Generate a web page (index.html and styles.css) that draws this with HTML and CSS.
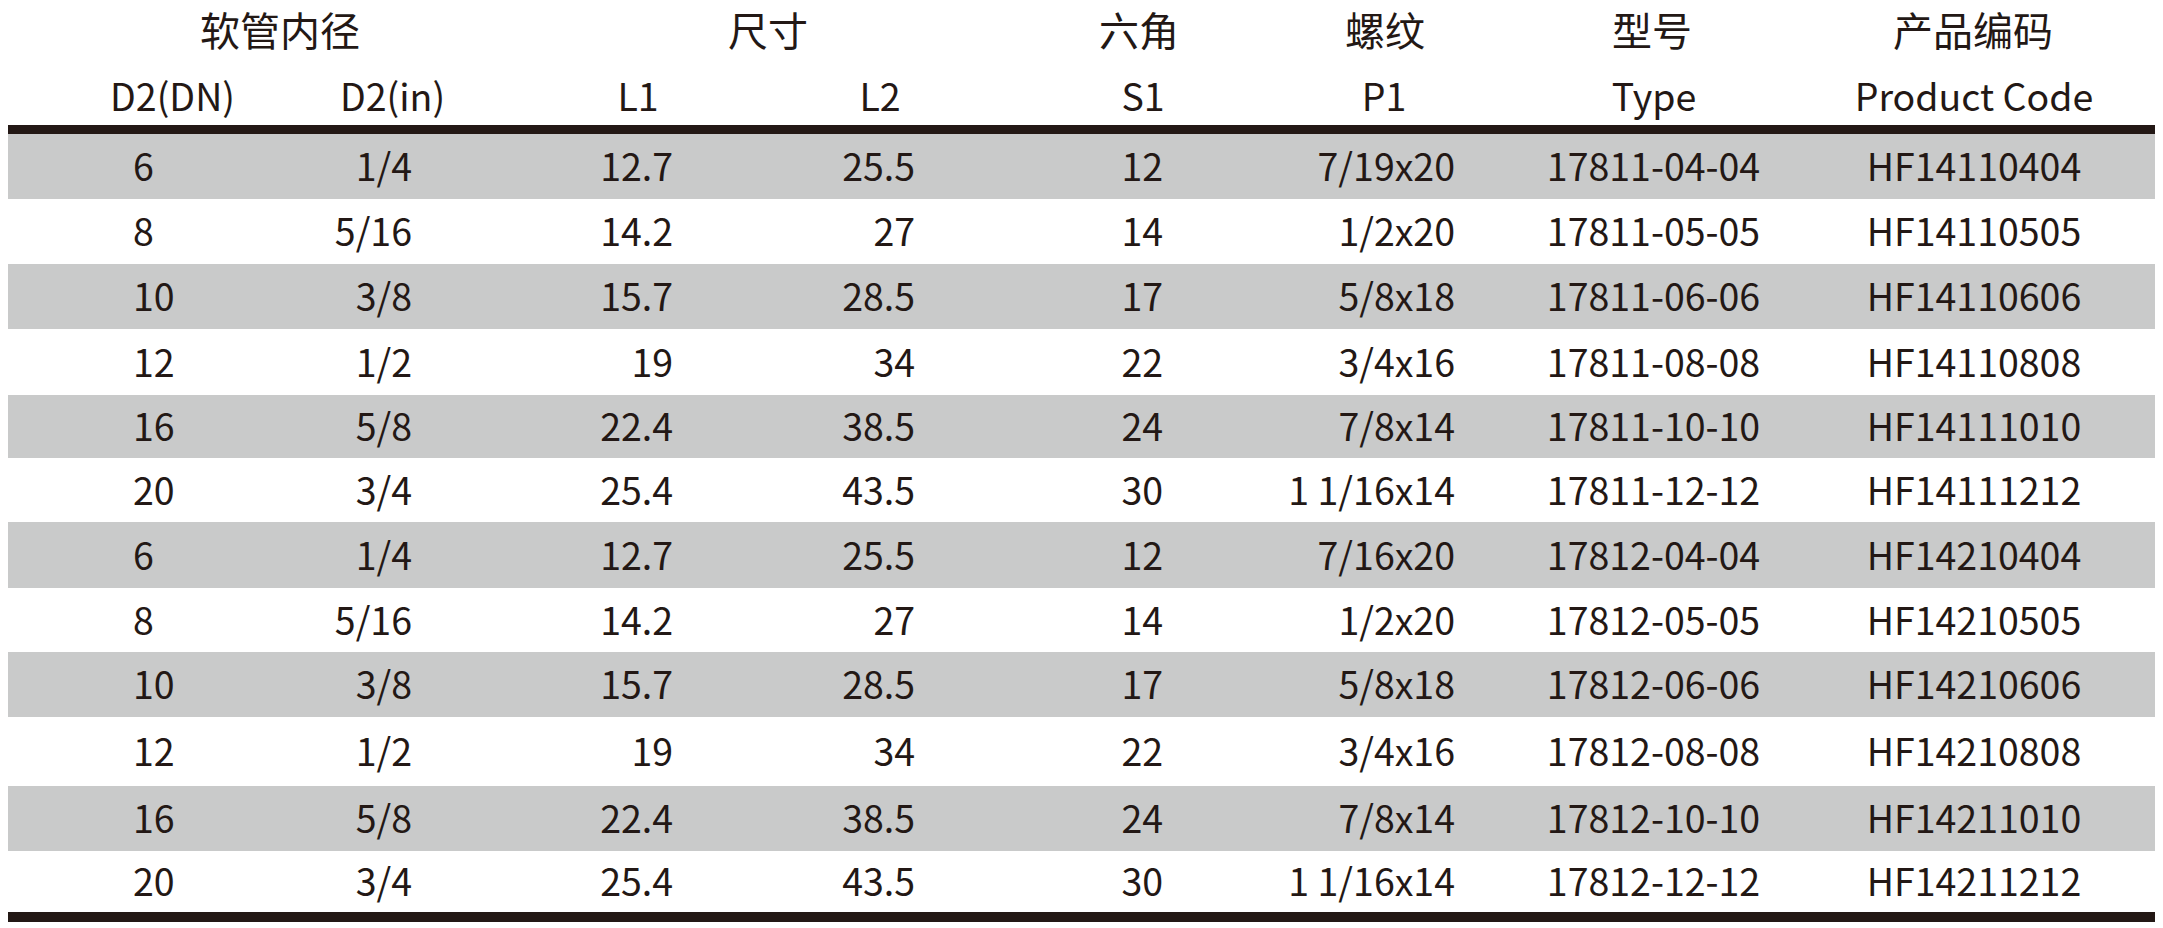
FILE: index.html
```html
<!DOCTYPE html>
<html lang="zh-CN">
<head>
<meta charset="utf-8">
<title>规格表</title>
<link rel="stylesheet" href="styles.css">
</head>
<body>
<div class="spec">
  <div class="head cn">
    <div class="h-hose">软管内径</div>
    <div class="h-size">尺寸</div>
    <div class="h-hex">六角</div>
    <div class="h-thread">螺纹</div>
    <div class="h-type">型号</div>
    <div class="h-code">产品编码</div>
  </div>
  <div class="head en">
    <div class="e1">D2(DN)</div>
    <div class="e2">D2(in)</div>
    <div class="e3">L1</div>
    <div class="e4">L2</div>
    <div class="e5">S1</div>
    <div class="e6">P1</div>
    <div class="e7">Type</div>
    <div class="e8">Product Code</div>
  </div>
  <div class="body">
    <div class="row"><div class="d1">6</div><div class="d2">1/4</div><div class="d3">12.7</div><div class="d4">25.5</div><div class="d5">12</div><div class="d6">7/19x20</div><div class="d7">17811-04-04</div><div class="d8">HF14110404</div></div>
    <div class="row"><div class="d1">8</div><div class="d2">5/16</div><div class="d3">14.2</div><div class="d4">27</div><div class="d5">14</div><div class="d6">1/2x20</div><div class="d7">17811-05-05</div><div class="d8">HF14110505</div></div>
    <div class="row"><div class="d1">10</div><div class="d2">3/8</div><div class="d3">15.7</div><div class="d4">28.5</div><div class="d5">17</div><div class="d6">5/8x18</div><div class="d7">17811-06-06</div><div class="d8">HF14110606</div></div>
    <div class="row"><div class="d1">12</div><div class="d2">1/2</div><div class="d3">19</div><div class="d4">34</div><div class="d5">22</div><div class="d6">3/4x16</div><div class="d7">17811-08-08</div><div class="d8">HF14110808</div></div>
    <div class="row"><div class="d1">16</div><div class="d2">5/8</div><div class="d3">22.4</div><div class="d4">38.5</div><div class="d5">24</div><div class="d6">7/8x14</div><div class="d7">17811-10-10</div><div class="d8">HF14111010</div></div>
    <div class="row"><div class="d1">20</div><div class="d2">3/4</div><div class="d3">25.4</div><div class="d4">43.5</div><div class="d5">30</div><div class="d6">1 1/16x14</div><div class="d7">17811-12-12</div><div class="d8">HF14111212</div></div>
    <div class="row"><div class="d1">6</div><div class="d2">1/4</div><div class="d3">12.7</div><div class="d4">25.5</div><div class="d5">12</div><div class="d6">7/16x20</div><div class="d7">17812-04-04</div><div class="d8">HF14210404</div></div>
    <div class="row"><div class="d1">8</div><div class="d2">5/16</div><div class="d3">14.2</div><div class="d4">27</div><div class="d5">14</div><div class="d6">1/2x20</div><div class="d7">17812-05-05</div><div class="d8">HF14210505</div></div>
    <div class="row"><div class="d1">10</div><div class="d2">3/8</div><div class="d3">15.7</div><div class="d4">28.5</div><div class="d5">17</div><div class="d6">5/8x18</div><div class="d7">17812-06-06</div><div class="d8">HF14210606</div></div>
    <div class="row"><div class="d1">12</div><div class="d2">1/2</div><div class="d3">19</div><div class="d4">34</div><div class="d5">22</div><div class="d6">3/4x16</div><div class="d7">17812-08-08</div><div class="d8">HF14210808</div></div>
    <div class="row"><div class="d1">16</div><div class="d2">5/8</div><div class="d3">22.4</div><div class="d4">38.5</div><div class="d5">24</div><div class="d6">7/8x14</div><div class="d7">17812-10-10</div><div class="d8">HF14211010</div></div>
    <div class="row"><div class="d1">20</div><div class="d2">3/4</div><div class="d3">25.4</div><div class="d4">43.5</div><div class="d5">30</div><div class="d6">1 1/16x14</div><div class="d7">17812-12-12</div><div class="d8">HF14211212</div></div>
  </div>
</div>
</body>
</html>
```

FILE: styles.css
```css
html, body {
  background: #ffffff;
}

body {
  margin: 8px;
  font-family: "Noto Sans CJK SC", "Noto Sans", sans-serif;
  color: #231815;
}

.spec {
  width: 2147px;
  --cols: 252px 210px 230px 260px 280px 260px 300px 355px;
}

.head {
  display: grid;
  grid-template-columns: var(--cols);
  white-space: nowrap;
}

.head > div,
.row > div {
  white-space: nowrap;
}

/* Chinese header row */
.cn {
  font-size: 40px;
  line-height: 38px;
  height: 38px;
  padding-top: 2px;
  box-sizing: border-box;
}

.cn > div {
  text-align: center;
}

.h-hose   { grid-column: 1 / 3; padding-left: 82px; }
.h-size   { grid-column: 3 / 5; padding-left: 106px; }
.h-hex    { grid-column: 5 / 6; padding-left: 78px; }
.h-thread { grid-column: 6 / 7; padding-left: 30px; }
.h-type   { grid-column: 7 / 8; padding-left: 4px; }
.h-code   { grid-column: 8 / 9; padding-right: 9px; }

/* English header row */
.en {
  font-size: 37.5px;
  line-height: 50px;
  padding-top: 24px;
  height: 79px;
  box-sizing: border-box;
}

.en > div {
  text-align: center;
}

.e1 { padding-left: 77px; }
.e2 { padding-left: 55px; }
.e3 { padding-left: 106px; }
.e4 { padding-left: 100px; }
.e5 { padding-left: 86px; }
.e6 { padding-left: 28px; }
.e7 { padding-left: 8px; }
.e8 { padding-right: 7px; }

/* Body */
.body {
  border-top: 9px solid #231815;
  border-bottom: 10px solid #231815;
  font-size: 37.5px;
}

.row {
  display: grid;
  grid-template-columns: var(--cols);
  align-items: center;
  height: 65px;
}

.row > div {
  padding-bottom: 4px;
}

.row:nth-child(odd) {
  background: #c9caca;
}

.row:nth-child(4)  { height: 66px; }
.row:nth-child(5)  { height: 63px; }
.row:nth-child(6)  { height: 64px; }
.row:nth-child(7)  { height: 66px; }
.row:nth-child(8)  { height: 64px; }
.row:nth-child(10) { height: 69px; }
.row:nth-child(12) { height: 61px; }

.d1 { text-align: left;  padding-left: 125px; }
.d2 { text-align: right; padding-right: 58px; }
.d3 { text-align: right; padding-right: 27px; }
.d4 { text-align: right; padding-right: 45px; }
.d5 { text-align: right; padding-right: 77px; }
.d6 { text-align: right; padding-right: 45px; }
.d7 { text-align: center; padding-left: 7px; }
.d8 { text-align: center; padding-right: 7px; }
```
